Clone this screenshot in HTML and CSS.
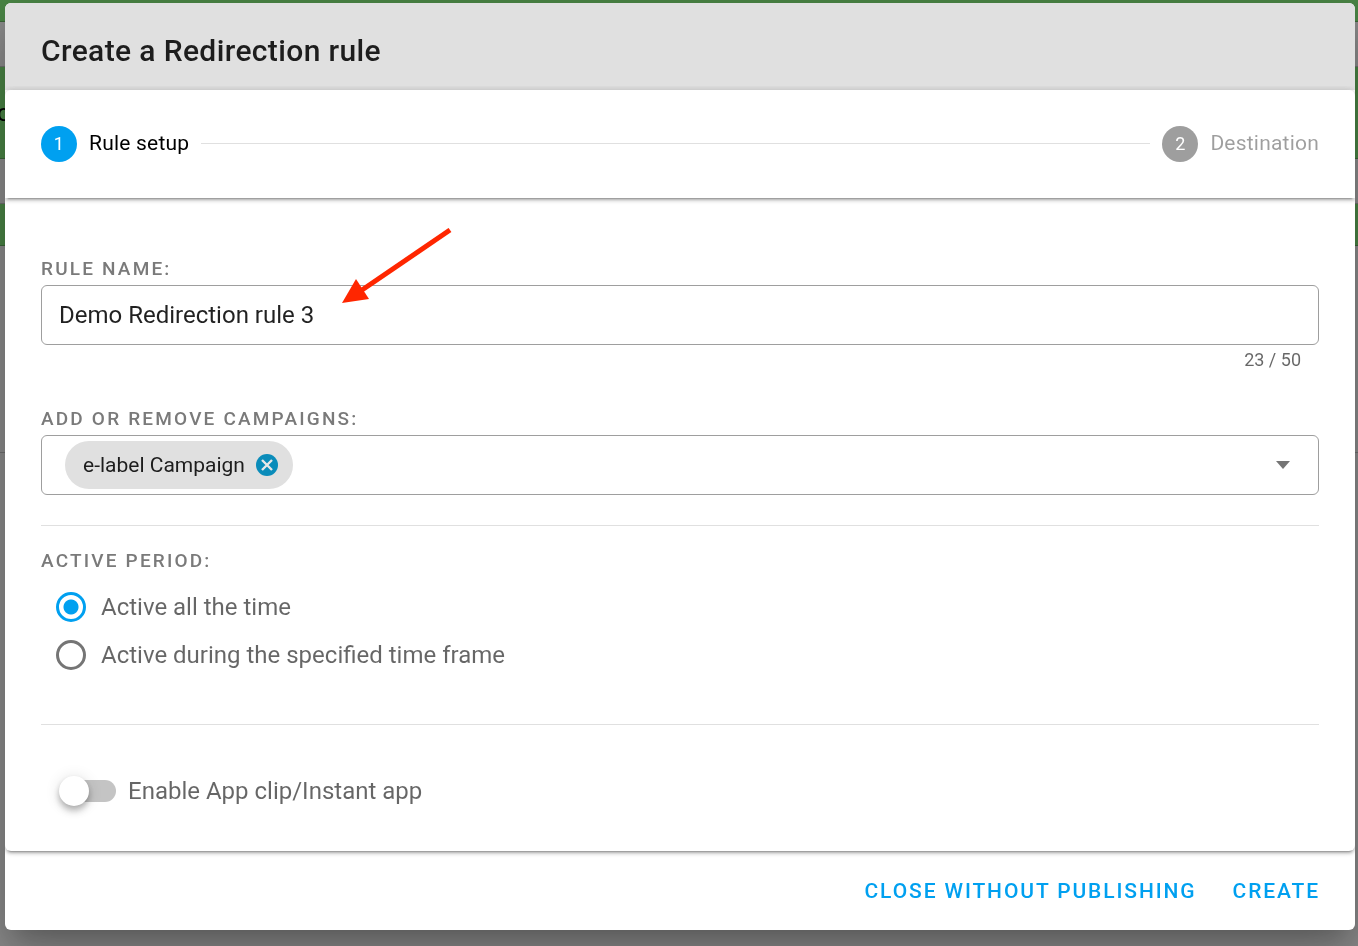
FILE: index.html
```
<!DOCTYPE html>
<html lang="en">
<head>
  <meta charset="UTF-8" />
  <meta name="viewport" content="width=device-width, initial-scale=1.0" />
  <title>Create a Redirection rule</title>
  <link rel="stylesheet" href="styles.css">
</head>
<body>
  <!-- dimmed page behind the dialog -->
  <div class="backdrop" aria-hidden="true">
    <div class="band green short"></div>
    <div class="band"></div>
    <div class="band green tall">c</div>
    <div class="band"></div>
    <div class="band green"></div>
    <div class="band panel"></div>
  </div>

  <form class="dialog" role="dialog" aria-labelledby="dialog-title">
    <h1 id="dialog-title" class="dialog-title">Create a Redirection rule</h1>

    <div class="stepper">
      <div class="steps">
        <div class="step active"><span class="step-number">1</span>Rule setup</div>
        <div class="step-line"></div>
        <div class="step"><span class="step-number">2</span>Destination</div>
      </div>

      <div class="content">
        <label class="caption" for="rule-name">Rule name:</label>
        <div class="name-field">
          <input class="field" type="text" id="rule-name" maxlength="50" value="Demo Redirection rule 3">
          <svg class="arrow" width="110" height="76" viewBox="0 0 110 76">
            <path d="M108 2L20 62" stroke="#ff2600" stroke-width="5" fill="none" />
            <path d="M0 75L14 51L27 71Z" fill="#ff2600" />
          </svg>
        </div>
        <div class="counter">23 / 50</div>

        <label class="caption" for="campaigns">Add or remove campaigns:</label>
        <div class="field campaigns">
          <span class="chip">
            e-label Campaign
            <button type="button" class="chip-close" aria-label="Remove e-label Campaign">
              <svg width="24" height="24" viewBox="0 0 24 24">
                <circle cx="12" cy="12" r="11" fill="#0a8cba" />
                <path d="M7 7L17 17M17 7L7 17" stroke="#e8e8e8" stroke-width="2.4" />
              </svg>
            </button>
          </span>
          <select id="campaigns">
            <option value=""></option>
          </select>
          <svg class="caret" width="14" height="8" viewBox="0 0 14 8">
            <path d="M0 0H14L7 8Z" fill="#757575" />
          </svg>
        </div>

        <hr>

        <fieldset class="period">
          <legend class="caption">Active period:</legend>
          <label class="option"><input type="radio" name="period" checked>Active all the time</label>
          <label class="option"><input type="radio" name="period">Active during the specified time frame</label>
        </fieldset>

        <hr>

        <label class="option switch"><input type="checkbox">Enable App clip/Instant app</label>
      </div>
    </div>

    <div class="actions">
      <button type="button">Close without publishing</button>
      <button type="button">Create</button>
    </div>
  </form>
</body>
</html>
```
FILE: styles.css
```
* {
  box-sizing: border-box;
}
body {
  margin: 0;
  padding: 3px 3px 16px 5px;
  min-height: 100vh;
  font-family: Roboto, sans-serif;
  background-color: #8c8c8c;
}

/* page behind */
.backdrop {
  position: fixed;
  inset: 0;
  z-index: -1;
}
.band {
  height: 45px;
  border-bottom: 1px solid #707070;
}
.band.green {
  height: 42px;
  background-color: #4a8545;
  border-color: #3a6637;
}
.band.short {
  height: 22px;
}
.band.tall {
  height: 92px;
  font-size: 24px;
  line-height: 92px;
  text-indent: -3px;
}
.band.panel {
  height: 207px;
}

.dialog {
  border-radius: 6px;
  background-color: #fff;
  box-shadow: 0 16px 22px -10px rgba(0, 0, 0, 0.2), 0 36px 57px 4px rgba(0, 0, 0, 0.14), 0 14px 69px 12px rgba(0, 0, 0, 0.12);
}
.dialog-title {
  margin: 0;
  padding: 24px 36px 15px;
  border-radius: 6px 6px 0 0;
  background-color: #e0e0e0;
  color: rgba(0, 0, 0, 0.87);
  font-size: 30px;
  font-weight: 500;
  line-height: 48px;
  letter-spacing: 0.0125em;
}

.stepper,
.steps {
  background-color: #fff;
  box-shadow: 0 4px 2px -3px rgba(0, 0, 0, 0.3), 0 3px 3px rgba(0, 0, 0, 0.14), 0 1px 7px rgba(0, 0, 0, 0.12);
}
.stepper {
  border-radius: 6px;
  clip-path: inset(-4px 0 -12px 0);
}
.steps {
  display: flex;
  align-items: center;
  gap: 12px;
  padding: 36px;
  border-radius: 6px 6px 0 0;
}
.step {
  display: flex;
  gap: 12px;
  font-size: 21px;
  line-height: 34px;
  letter-spacing: 0.01em;
  color: rgba(0, 0, 0, 0.38);
}
.step.active {
  color: #000;
}
.step-number {
  width: 36px;
  height: 36px;
  border-radius: 50%;
  background-color: #9e9e9e;
  color: #fff;
  font-size: 18px;
  line-height: 36px;
  text-align: center;
}
.active .step-number {
  background-color: #00a0f0;
}
.step-line {
  flex: 1;
  margin-bottom: 2px;
  border-top: 1px solid #e0e0e0;
}

.content {
  padding: 55px 36px 36px;
}
.caption {
  display: block;
  padding: 0;
  color: #7a7a7a;
  font-size: 19px;
  font-weight: 500;
  line-height: 32px;
  letter-spacing: 0.115em;
  text-transform: uppercase;
}
.field {
  display: block;
  width: 100%;
  height: 60px;
  padding: 0 17px;
  border: 1px solid #9e9e9e;
  border-radius: 6px;
  background-color: #fff;
  color: rgba(0, 0, 0, 0.87);
  font-family: inherit;
  font-size: 24px;
}
.name-field {
  position: relative;
}
.arrow {
  position: absolute;
  left: 301px;
  bottom: 41px;
}
.counter {
  margin-bottom: 28px;
  padding-right: 18px;
  color: rgba(0, 0, 0, 0.6);
  font-size: 18px;
  line-height: 30px;
  text-align: right;
}
.campaigns {
  display: flex;
  align-items: center;
  padding: 0 28px 0 23px;
}
.chip {
  display: flex;
  align-items: center;
  gap: 10px;
  height: 48px;
  padding: 0 14px 0 18px;
  border-radius: 24px;
  background-color: #e0e0e0;
  font-size: 21px;
}
.chip-close {
  display: flex;
  padding: 0;
  border: 0;
  background: none;
}
.campaigns select {
  flex: 1;
  height: 48px;
  border: 0;
  background: none;
  appearance: none;
}
hr {
  height: 1px;
  margin: 30px 0 19px;
  border: 0;
  background-color: #e0e0e0;
}

.period {
  margin: 0 0 45px;
  padding: 0;
  border: 0;
}
.period .caption {
  margin-bottom: 6px;
}
.option {
  display: flex;
  align-items: center;
  gap: 15px;
  height: 48px;
  padding-left: 15px;
  color: rgba(0, 0, 0, 0.6);
  font-size: 24px;
}
.option input {
  margin: 0;
  appearance: none;
}
.option input[type="radio"] {
  width: 30px;
  height: 30px;
  border: 3px solid #757575;
  border-radius: 50%;
}
.option input[type="radio"]:checked {
  border-color: #00a0f0;
  background: radial-gradient(circle, #00a0f0 7px, transparent 8px);
}
.switch {
  gap: 12px;
  margin-top: 42px;
  padding-left: 21px;
}
.switch input {
  position: relative;
  width: 54px;
  height: 22px;
  border-radius: 11px;
  background-color: #c4c4c4;
}
.switch input::before {
  content: "";
  position: absolute;
  top: -4px;
  left: -3px;
  width: 30px;
  height: 30px;
  border-radius: 50%;
  background-color: #fff;
  box-shadow: 0 3px 6px -1px rgba(0, 0, 0, 0.2), 0 6px 7px rgba(0, 0, 0, 0.14), 0 1px 15px rgba(0, 0, 0, 0.12);
}

.actions {
  display: flex;
  justify-content: flex-end;
  gap: 36px;
  padding: 13px 35px 12px;
}
.actions button {
  height: 54px;
  padding: 0;
  border: 0;
  background: none;
  color: #00a0f0;
  font-family: inherit;
  font-size: 21px;
  font-weight: 500;
  letter-spacing: 0.09em;
  text-transform: uppercase;
}
```
